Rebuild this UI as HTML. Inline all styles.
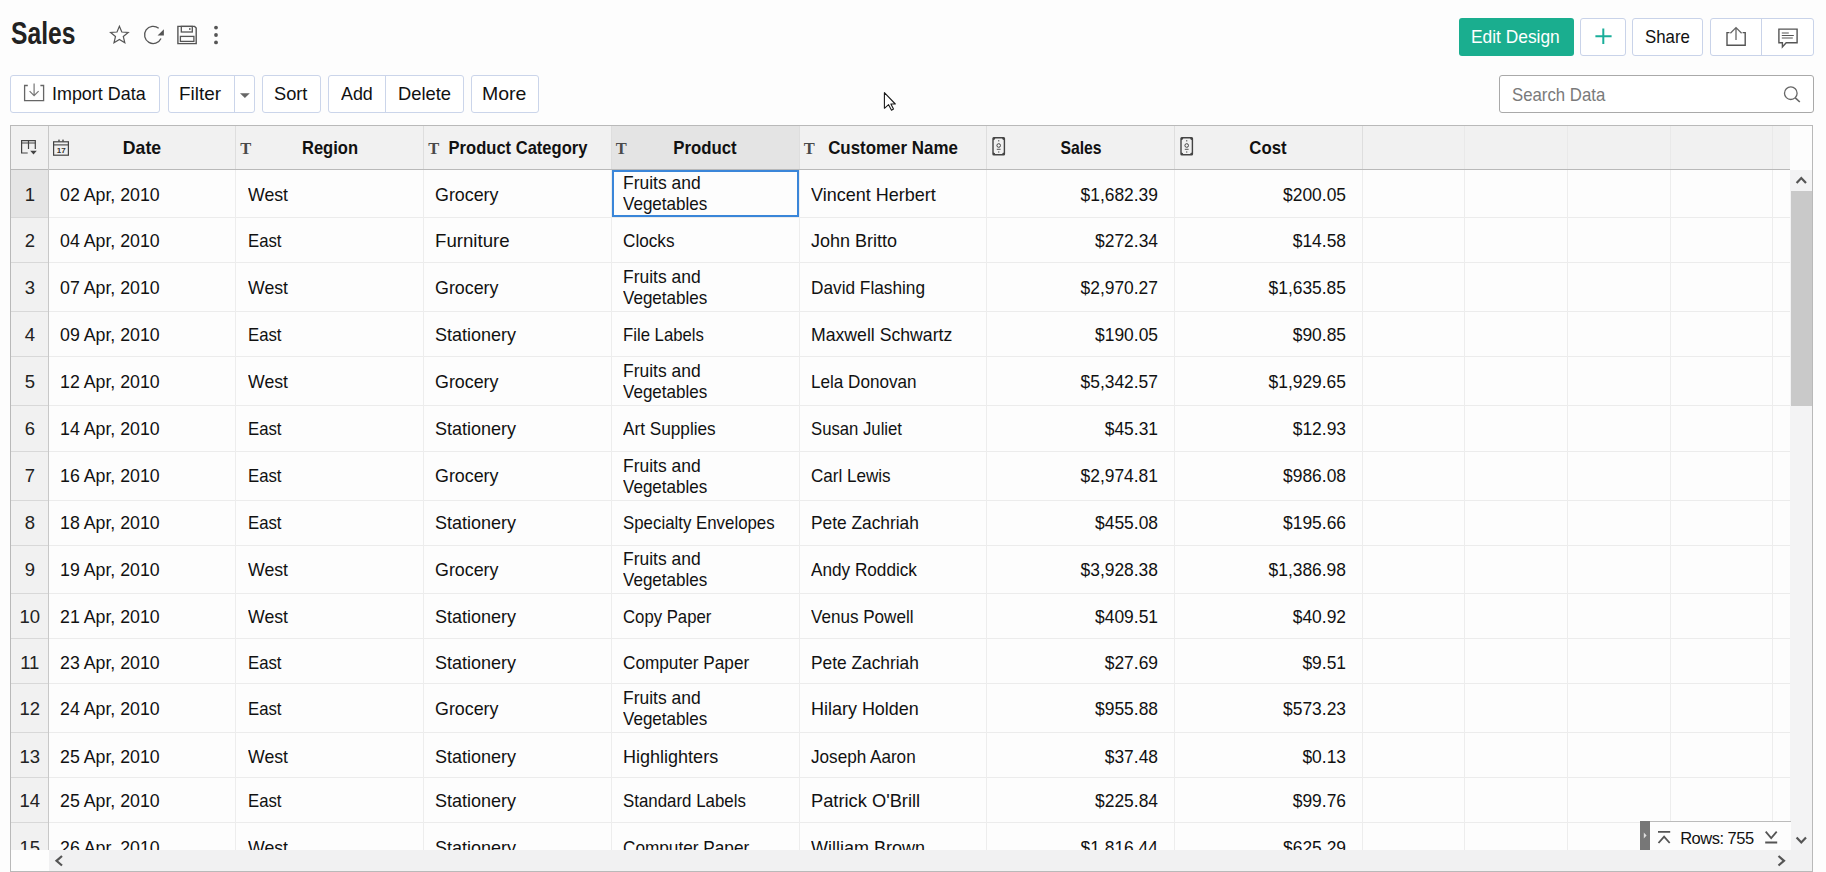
<!DOCTYPE html>
<html><head><meta charset="utf-8"><style>
html,body{margin:0;padding:0;}
body{width:1826px;height:872px;position:relative;overflow:hidden;background:#fdfdfd;font-family:"Liberation Sans",sans-serif;}
.t{position:absolute;white-space:nowrap;line-height:1;}
.r{position:absolute;box-sizing:border-box;}
svg{position:absolute;overflow:visible;}
</style></head><body>
<div class="t" style="left:10.9px;top:17.68px;font-size:30.5px;font-weight:700;color:#222;transform:scaleX(0.808);transform-origin:0 0;">Sales</div>
<svg style="left:0;top:0" width="260" height="60">
<path d="M119.4 26.3 L121.8 32.0 L128.2 32.4 L123.3 36.5 L124.8 42.8 L119.4 39.5 L114.0 42.8 L115.5 36.5 L110.6 32.4 L117.0 32.0 Z" fill="none" stroke="#555" stroke-width="1.2" stroke-linejoin="miter"/>
<path d="M161.0 38.5 A8.6 8.6 0 1 1 158.7 28.3" fill="none" stroke="#555" stroke-width="1.3"/>
<path d="M163.9 29.2 L163.9 35.6 L157.6 35.6 Z" fill="#555"/>
<path d="M177.9 26.4 H194.6 L196.2 28 V43.6 H177.9 Z" fill="none" stroke="#555" stroke-width="1.4"/>
<rect x="181.3" y="26.4" width="11" height="5.6" fill="none" stroke="#555" stroke-width="1.3"/>
<rect x="189" y="28.2" width="1.6" height="1.6" fill="#555"/>
<rect x="180.4" y="36.4" width="13.5" height="5" fill="none" stroke="#555" stroke-width="1.3"/>
<circle cx="216" cy="27.6" r="1.9" fill="#555"/><circle cx="216" cy="35" r="1.9" fill="#555"/><circle cx="216" cy="42.4" r="1.9" fill="#555"/>
</svg>
<div class="r" style="left:1458.5px;top:18px;width:115.0px;height:38px;background:#1aae8f;border-radius:3px;"></div>
<div class="t" style="left:1471px;top:28.34px;font-size:18.5px;font-weight:400;color:#fff;transform:scaleX(0.9376);transform-origin:0 0;">Edit Design</div>
<div class="r" style="left:1580px;top:18px;width:46px;height:38px;background:#fff;border:1px solid #c9d3e9;border-radius:3px;"></div>
<svg style="left:0;top:0" width="1" height="1"><path d="M1603.3 28.6 V44 M1595.4 36.3 H1611.6" stroke="#1aae9a" stroke-width="2"/></svg>
<div class="r" style="left:1632px;top:18px;width:71px;height:38px;background:#fff;border:1px solid #c9d3e9;border-radius:3px;"></div>
<div class="t" style="left:1645px;top:28.34px;font-size:18.5px;font-weight:400;color:#111;transform:scaleX(0.9104);transform-origin:0 0;">Share</div>
<div class="r" style="left:1710px;top:18px;width:104px;height:38px;background:#fff;border:1px solid #c9d3e9;border-radius:3px;"></div>
<div class="r" style="left:1761px;top:18px;width:1px;height:38px;background:#c9d3e9;"></div>
<svg style="left:0;top:0" width="1" height="1">
<path d="M1729.5 32.6 H1727 V45.3 H1745.2 V32.6 H1742.6" fill="none" stroke="#555" stroke-width="1.4"/>
<path d="M1736 40 V27.8 M1730.4 33.2 L1736 27.6 L1741.6 33.2" fill="none" stroke="#666" stroke-width="1.3"/>
<path d="M1778.9 29.1 H1797.1 V42.8 H1786.2 L1782.4 46.9 V42.8 H1778.9 Z" fill="none" stroke="#555" stroke-width="1.4"/>
<path d="M1781.8 33 H1788.8 M1781.8 35.5 H1793.8 M1781.8 38 H1792.8" stroke="#555" stroke-width="1.1"/>
</svg>
<div class="r" style="left:10px;top:75px;width:150px;height:38px;background:#fff;border:1px solid #cbd5ea;border-radius:3px;"></div>
<svg style="left:0;top:0" width="1" height="1">
<path d="M27.8 85.5 H24.6 V100.6 H43.6 V85.5 H40.4" fill="none" stroke="#666" stroke-width="1.3"/>
<path d="M34.1 83.5 V95.5 M29.6 91.2 L34.1 95.7 L38.6 91.2" fill="none" stroke="#777" stroke-width="1.2"/>
</svg>
<div class="t" style="left:52px;top:84.84px;font-size:18.5px;font-weight:400;color:#111;transform:scaleX(0.9684);transform-origin:0 0;">Import Data</div>
<div class="r" style="left:167.5px;top:75px;width:87.0px;height:38px;background:#fff;border:1px solid #cbd5ea;border-radius:3px;"></div>
<div class="r" style="left:234px;top:75px;width:1px;height:38px;background:#cbd5ea;"></div>
<div class="t" style="left:179.3px;top:84.84px;font-size:18.5px;font-weight:400;color:#111;transform:scaleX(1.02);transform-origin:0 0;">Filter</div>
<svg style="left:0;top:0" width="1" height="1"><path d="M240 93.2 H249.8 L244.9 98 Z" fill="#666"/></svg>
<div class="r" style="left:261.5px;top:75px;width:59.0px;height:38px;background:#fff;border:1px solid #cbd5ea;border-radius:3px;"></div>
<div class="t" style="left:274px;top:84.84px;font-size:18.5px;font-weight:400;color:#111;transform:scaleX(0.9848);transform-origin:0 0;">Sort</div>
<div class="r" style="left:327.5px;top:75px;width:136.5px;height:38px;background:#fff;border:1px solid #cbd5ea;border-radius:3px;"></div>
<div class="r" style="left:384.5px;top:75px;width:1.0px;height:38px;background:#cbd5ea;"></div>
<div class="t" style="left:340.5px;top:84.84px;font-size:18.5px;font-weight:400;color:#111;transform:scaleX(0.9656);transform-origin:0 0;">Add</div>
<div class="t" style="left:398.2px;top:84.84px;font-size:18.5px;font-weight:400;color:#111;transform:scaleX(0.9923);transform-origin:0 0;">Delete</div>
<div class="r" style="left:470.5px;top:75px;width:68.5px;height:38px;background:#fff;border:1px solid #cbd5ea;border-radius:3px;"></div>
<div class="t" style="left:482px;top:84.84px;font-size:18.5px;font-weight:400;color:#111;transform:scaleX(1.0525);transform-origin:0 0;">More</div>
<svg style="left:0;top:0" width="1" height="1">
<path d="M884.4 92.6 L884.4 108.3 L888.6 104.7 L891.5 110.2 L893.5 109.1 L890.9 104.0 L895.3 104.0 Z" fill="#fff" stroke="#1a1a1a" stroke-width="1.1" stroke-linejoin="round"/>
</svg>
<div class="r" style="left:1499px;top:75px;width:315px;height:38px;background:#fff;border:1px solid #a9a9a9;border-radius:3px;"></div>
<div class="t" style="left:1511.5px;top:86.14px;font-size:18.5px;font-weight:400;color:#7a7a7a;transform:scaleX(0.9069);transform-origin:0 0;">Search Data</div>
<svg style="left:0;top:0" width="1" height="1"><circle cx="1790.8" cy="93.2" r="6.3" fill="none" stroke="#666" stroke-width="1.3"/><path d="M1795.3 97.8 L1799.8 102" stroke="#666" stroke-width="1.6"/></svg>
<div class="r" style="left:10px;top:125px;width:1803px;height:747px;background:#fdfdfd;border:1px solid #b9b9b9;"></div>
<div class="r" style="left:11px;top:126px;width:1779px;height:43px;background:#f1f1f1;"></div>
<div class="r" style="left:611.5px;top:126px;width:187.5px;height:43px;background:#e4e4e4;"></div>
<div class="r" style="left:11px;top:170px;width:37px;height:680px;background:#f1f1f1;"></div>
<div class="r" style="left:11px;top:170px;width:37px;height:47px;background:#e5e5e5;"></div>
<div class="r" style="left:11px;top:217px;width:1779px;height:1px;background:#ececec;"></div>
<div class="r" style="left:11px;top:262px;width:1779px;height:1px;background:#ececec;"></div>
<div class="r" style="left:11px;top:311px;width:1779px;height:1px;background:#ececec;"></div>
<div class="r" style="left:11px;top:356px;width:1779px;height:1px;background:#ececec;"></div>
<div class="r" style="left:11px;top:405px;width:1779px;height:1px;background:#ececec;"></div>
<div class="r" style="left:11px;top:451px;width:1779px;height:1px;background:#ececec;"></div>
<div class="r" style="left:11px;top:500px;width:1779px;height:1px;background:#ececec;"></div>
<div class="r" style="left:11px;top:545px;width:1779px;height:1px;background:#ececec;"></div>
<div class="r" style="left:11px;top:593px;width:1779px;height:1px;background:#ececec;"></div>
<div class="r" style="left:11px;top:638px;width:1779px;height:1px;background:#ececec;"></div>
<div class="r" style="left:11px;top:683px;width:1779px;height:1px;background:#ececec;"></div>
<div class="r" style="left:11px;top:732px;width:1779px;height:1px;background:#ececec;"></div>
<div class="r" style="left:11px;top:777px;width:1779px;height:1px;background:#ececec;"></div>
<div class="r" style="left:11px;top:822px;width:1779px;height:1px;background:#ececec;"></div>
<div class="r" style="left:11px;top:217px;width:37px;height:1px;background:#d8d8d8;"></div>
<div class="r" style="left:11px;top:262px;width:37px;height:1px;background:#d8d8d8;"></div>
<div class="r" style="left:11px;top:311px;width:37px;height:1px;background:#d8d8d8;"></div>
<div class="r" style="left:11px;top:356px;width:37px;height:1px;background:#d8d8d8;"></div>
<div class="r" style="left:11px;top:405px;width:37px;height:1px;background:#d8d8d8;"></div>
<div class="r" style="left:11px;top:451px;width:37px;height:1px;background:#d8d8d8;"></div>
<div class="r" style="left:11px;top:500px;width:37px;height:1px;background:#d8d8d8;"></div>
<div class="r" style="left:11px;top:545px;width:37px;height:1px;background:#d8d8d8;"></div>
<div class="r" style="left:11px;top:593px;width:37px;height:1px;background:#d8d8d8;"></div>
<div class="r" style="left:11px;top:638px;width:37px;height:1px;background:#d8d8d8;"></div>
<div class="r" style="left:11px;top:683px;width:37px;height:1px;background:#d8d8d8;"></div>
<div class="r" style="left:11px;top:732px;width:37px;height:1px;background:#d8d8d8;"></div>
<div class="r" style="left:11px;top:777px;width:37px;height:1px;background:#d8d8d8;"></div>
<div class="r" style="left:11px;top:822px;width:37px;height:1px;background:#d8d8d8;"></div>
<div class="r" style="left:11px;top:169px;width:1779px;height:1px;background:#b9b9b9;"></div>
<div class="r" style="left:48px;top:126px;width:1px;height:724px;background:#c8c8c8;"></div>
<div class="r" style="left:235px;top:126px;width:1px;height:43px;background:#dedede;"></div>
<div class="r" style="left:235px;top:170px;width:1px;height:680px;background:#ededed;"></div>
<div class="r" style="left:423px;top:126px;width:1px;height:43px;background:#dedede;"></div>
<div class="r" style="left:423px;top:170px;width:1px;height:680px;background:#ededed;"></div>
<div class="r" style="left:611px;top:126px;width:1px;height:43px;background:#dedede;"></div>
<div class="r" style="left:611px;top:170px;width:1px;height:680px;background:#ededed;"></div>
<div class="r" style="left:799px;top:126px;width:1px;height:43px;background:#dedede;"></div>
<div class="r" style="left:799px;top:170px;width:1px;height:680px;background:#ededed;"></div>
<div class="r" style="left:986px;top:126px;width:1px;height:43px;background:#dedede;"></div>
<div class="r" style="left:986px;top:170px;width:1px;height:680px;background:#ededed;"></div>
<div class="r" style="left:1174px;top:126px;width:1px;height:43px;background:#dedede;"></div>
<div class="r" style="left:1174px;top:170px;width:1px;height:680px;background:#ededed;"></div>
<div class="r" style="left:1362px;top:126px;width:1px;height:43px;background:#dedede;"></div>
<div class="r" style="left:1362px;top:170px;width:1px;height:680px;background:#ededed;"></div>
<div class="r" style="left:1464px;top:126px;width:1px;height:43px;background:#e9e9e9;"></div>
<div class="r" style="left:1464px;top:170px;width:1px;height:680px;background:#ededed;"></div>
<div class="r" style="left:1567px;top:126px;width:1px;height:43px;background:#e9e9e9;"></div>
<div class="r" style="left:1567px;top:170px;width:1px;height:680px;background:#ededed;"></div>
<div class="r" style="left:1670px;top:126px;width:1px;height:43px;background:#e9e9e9;"></div>
<div class="r" style="left:1670px;top:170px;width:1px;height:680px;background:#ededed;"></div>
<div class="r" style="left:1772px;top:126px;width:1px;height:43px;background:#e9e9e9;"></div>
<div class="r" style="left:1772px;top:170px;width:1px;height:680px;background:#ededed;"></div>
<div class="r" style="left:1790px;top:126px;width:22px;height:44px;background:#fdfdfd;"></div>
<svg style="left:0;top:0" width="1" height="1">
<path d="M27.7 153 H21.6 V140.6 H35.3 V149" fill="none" stroke="#444" stroke-width="1.2"/>
<path d="M21.6 143 H35.3 M28.5 140.6 V149" fill="none" stroke="#444" stroke-width="1.2"/>
<path d="M30.2 150.8 H36.8 L33.5 154.6 Z" fill="#444"/>
<rect x="53.6" y="141.8" width="14.8" height="13.4" fill="none" stroke="#444" stroke-width="1.2"/>
<path d="M53.6 144.9 H68.4" stroke="#444" stroke-width="1.1"/>
<rect x="58.3" y="139.6" width="1.4" height="2" fill="#444"/><rect x="62.3" y="139.6" width="1.4" height="2" fill="#444"/>
</svg>
<div class="t" style="left:56.8px;top:147.43px;font-size:8px;font-weight:700;color:#333;">17</div>
<div class="t" style="left:240.3px;top:141.03px;font-size:16.5px;font-weight:700;color:#4a4a4a;font-family:'Liberation Serif',serif;">T</div>
<div class="t" style="left:428.3px;top:141.03px;font-size:16.5px;font-weight:700;color:#4a4a4a;font-family:'Liberation Serif',serif;">T</div>
<div class="t" style="left:615.8px;top:141.03px;font-size:16.5px;font-weight:700;color:#4a4a4a;font-family:'Liberation Serif',serif;">T</div>
<div class="t" style="left:803.8px;top:141.03px;font-size:16.5px;font-weight:700;color:#4a4a4a;font-family:'Liberation Serif',serif;">T</div>
<svg style="left:0;top:0" width="1" height="1">
<rect x="993" y="137.8" width="11.4" height="17" rx="0.8" fill="none" stroke="#444" stroke-width="1.4"/>
<circle cx="998.7" cy="145.5" r="1.8" fill="none" stroke="#444" stroke-width="1"/>
<path d="M996.8 149.3 H1000.6" stroke="#444" stroke-width="0.9"/>
<rect x="998.1" y="140.2" width="1.2" height="1.2" fill="#555"/><rect x="998.1" y="151.4" width="1.2" height="1.2" fill="#555"/>
<path d="M993 137.8 h2.4 a2.4 2.4 0 0 1 -2.4 2.4 Z M1004.4 137.8 h-2.4 a2.4 2.4 0 0 0 2.4 2.4 Z M993 154.8 h2.4 a2.4 2.4 0 0 0 -2.4 -2.4 Z M1004.4 154.8 h-2.4 a2.4 2.4 0 0 1 2.4 -2.4 Z" fill="#444"/>
</svg>
<svg style="left:0;top:0" width="1" height="1">
<rect x="1181" y="137.8" width="11.4" height="17" rx="0.8" fill="none" stroke="#444" stroke-width="1.4"/>
<circle cx="1186.7" cy="145.5" r="1.8" fill="none" stroke="#444" stroke-width="1"/>
<path d="M1184.8 149.3 H1188.6" stroke="#444" stroke-width="0.9"/>
<rect x="1186.1" y="140.2" width="1.2" height="1.2" fill="#555"/><rect x="1186.1" y="151.4" width="1.2" height="1.2" fill="#555"/>
<path d="M1181 137.8 h2.4 a2.4 2.4 0 0 1 -2.4 2.4 Z M1192.4 137.8 h-2.4 a2.4 2.4 0 0 0 2.4 2.4 Z M1181 154.8 h2.4 a2.4 2.4 0 0 0 -2.4 -2.4 Z M1192.4 154.8 h-2.4 a2.4 2.4 0 0 1 2.4 -2.4 Z" fill="#444"/>
</svg>
<div class="t" style="left:41.70px;width:200px;text-align:center;top:139.34px;font-size:18.5px;font-weight:700;color:#111;transform:scaleX(0.9538);transform-origin:50% 0;">Date</div>
<div class="t" style="left:230.00px;width:200px;text-align:center;top:139.34px;font-size:18.5px;font-weight:700;color:#111;transform:scaleX(0.8934);transform-origin:50% 0;">Region</div>
<div class="t" style="left:417.70px;width:200px;text-align:center;top:139.34px;font-size:18.5px;font-weight:700;color:#111;transform:scaleX(0.8945);transform-origin:50% 0;">Product Category</div>
<div class="t" style="left:604.50px;width:200px;text-align:center;top:139.34px;font-size:18.5px;font-weight:700;color:#111;transform:scaleX(0.9058);transform-origin:50% 0;">Product</div>
<div class="t" style="left:793.00px;width:200px;text-align:center;top:139.34px;font-size:18.5px;font-weight:700;color:#111;transform:scaleX(0.9143);transform-origin:50% 0;">Customer Name</div>
<div class="t" style="left:981.00px;width:200px;text-align:center;top:139.34px;font-size:18.5px;font-weight:700;color:#111;transform:scaleX(0.8511);transform-origin:50% 0;">Sales</div>
<div class="t" style="left:1168.40px;width:200px;text-align:center;top:139.34px;font-size:18.5px;font-weight:700;color:#111;transform:scaleX(0.9062);transform-origin:50% 0;">Cost</div>
<div style="position:absolute;left:0;top:170px;width:1790px;height:680px;overflow:hidden">
<div class="t" style="left:11.80px;width:36px;text-align:center;top:15.74px;font-size:18.5px;font-weight:400;color:#222;">1</div>
<div class="t" style="left:60.4px;top:15.74px;font-size:18.5px;font-weight:400;color:#111;transform:scaleX(0.9598);transform-origin:0 0;">02 Apr, 2010</div>
<div class="t" style="left:247.6px;top:15.74px;font-size:18.5px;font-weight:400;color:#111;transform:scaleX(0.9571);transform-origin:0 0;">West</div>
<div class="t" style="left:435px;top:15.74px;font-size:18.5px;font-weight:400;color:#111;transform:scaleX(0.9646);transform-origin:0 0;">Grocery</div>
<div class="t" style="left:623px;top:4.34px;font-size:18.5px;font-weight:400;color:#111;transform:scaleX(0.9437);transform-origin:0 0;">Fruits and</div>
<div class="t" style="left:623px;top:25.34px;font-size:18.5px;font-weight:400;color:#111;transform:scaleX(0.9209);transform-origin:0 0;">Vegetables</div>
<div class="t" style="left:810.5px;top:15.74px;font-size:18.5px;font-weight:400;color:#111;transform:scaleX(0.9727);transform-origin:0 0;">Vincent Herbert</div>
<div class="t" style="left:758.00px;width:400px;text-align:right;top:15.74px;font-size:18.5px;font-weight:400;color:#111;transform:scaleX(0.9411);transform-origin:100% 0;">$1,682.39</div>
<div class="t" style="left:945.50px;width:400px;text-align:right;top:15.74px;font-size:18.5px;font-weight:400;color:#111;transform:scaleX(0.9411);transform-origin:100% 0;">$200.05</div>
<div class="t" style="left:11.80px;width:36px;text-align:center;top:62.44px;font-size:18.5px;font-weight:400;color:#222;">2</div>
<div class="t" style="left:60.4px;top:62.44px;font-size:18.5px;font-weight:400;color:#111;transform:scaleX(0.9598);transform-origin:0 0;">04 Apr, 2010</div>
<div class="t" style="left:247.6px;top:62.44px;font-size:18.5px;font-weight:400;color:#111;transform:scaleX(0.9056);transform-origin:0 0;">East</div>
<div class="t" style="left:435px;top:62.44px;font-size:18.5px;font-weight:400;color:#111;transform:scaleX(1.0083);transform-origin:0 0;">Furniture</div>
<div class="t" style="left:623px;top:62.44px;font-size:18.5px;font-weight:400;color:#111;transform:scaleX(0.9278);transform-origin:0 0;">Clocks</div>
<div class="t" style="left:810.5px;top:62.44px;font-size:18.5px;font-weight:400;color:#111;transform:scaleX(0.9727);transform-origin:0 0;">John Britto</div>
<div class="t" style="left:758.00px;width:400px;text-align:right;top:62.44px;font-size:18.5px;font-weight:400;color:#111;transform:scaleX(0.9411);transform-origin:100% 0;">$272.34</div>
<div class="t" style="left:945.50px;width:400px;text-align:right;top:62.44px;font-size:18.5px;font-weight:400;color:#111;transform:scaleX(0.9411);transform-origin:100% 0;">$14.58</div>
<div class="t" style="left:11.80px;width:36px;text-align:center;top:109.34px;font-size:18.5px;font-weight:400;color:#222;">3</div>
<div class="t" style="left:60.4px;top:109.34px;font-size:18.5px;font-weight:400;color:#111;transform:scaleX(0.9598);transform-origin:0 0;">07 Apr, 2010</div>
<div class="t" style="left:247.6px;top:109.34px;font-size:18.5px;font-weight:400;color:#111;transform:scaleX(0.9571);transform-origin:0 0;">West</div>
<div class="t" style="left:435px;top:109.34px;font-size:18.5px;font-weight:400;color:#111;transform:scaleX(0.9646);transform-origin:0 0;">Grocery</div>
<div class="t" style="left:623px;top:97.84px;font-size:18.5px;font-weight:400;color:#111;transform:scaleX(0.9437);transform-origin:0 0;">Fruits and</div>
<div class="t" style="left:623px;top:118.84px;font-size:18.5px;font-weight:400;color:#111;transform:scaleX(0.9209);transform-origin:0 0;">Vegetables</div>
<div class="t" style="left:810.5px;top:109.34px;font-size:18.5px;font-weight:400;color:#111;transform:scaleX(0.9317);transform-origin:0 0;">David Flashing</div>
<div class="t" style="left:758.00px;width:400px;text-align:right;top:109.34px;font-size:18.5px;font-weight:400;color:#111;transform:scaleX(0.9411);transform-origin:100% 0;">$2,970.27</div>
<div class="t" style="left:945.50px;width:400px;text-align:right;top:109.34px;font-size:18.5px;font-weight:400;color:#111;transform:scaleX(0.9411);transform-origin:100% 0;">$1,635.85</div>
<div class="t" style="left:11.80px;width:36px;text-align:center;top:156.34px;font-size:18.5px;font-weight:400;color:#222;">4</div>
<div class="t" style="left:60.4px;top:156.34px;font-size:18.5px;font-weight:400;color:#111;transform:scaleX(0.9598);transform-origin:0 0;">09 Apr, 2010</div>
<div class="t" style="left:247.6px;top:156.34px;font-size:18.5px;font-weight:400;color:#111;transform:scaleX(0.9056);transform-origin:0 0;">East</div>
<div class="t" style="left:435px;top:156.34px;font-size:18.5px;font-weight:400;color:#111;transform:scaleX(0.9732);transform-origin:0 0;">Stationery</div>
<div class="t" style="left:623px;top:156.34px;font-size:18.5px;font-weight:400;color:#111;transform:scaleX(0.9045);transform-origin:0 0;">File Labels</div>
<div class="t" style="left:810.5px;top:156.34px;font-size:18.5px;font-weight:400;color:#111;transform:scaleX(0.9541);transform-origin:0 0;">Maxwell Schwartz</div>
<div class="t" style="left:758.00px;width:400px;text-align:right;top:156.34px;font-size:18.5px;font-weight:400;color:#111;transform:scaleX(0.9411);transform-origin:100% 0;">$190.05</div>
<div class="t" style="left:945.50px;width:400px;text-align:right;top:156.34px;font-size:18.5px;font-weight:400;color:#111;transform:scaleX(0.9411);transform-origin:100% 0;">$90.85</div>
<div class="t" style="left:11.80px;width:36px;text-align:center;top:202.84px;font-size:18.5px;font-weight:400;color:#222;">5</div>
<div class="t" style="left:60.4px;top:202.84px;font-size:18.5px;font-weight:400;color:#111;transform:scaleX(0.9598);transform-origin:0 0;">12 Apr, 2010</div>
<div class="t" style="left:247.6px;top:202.84px;font-size:18.5px;font-weight:400;color:#111;transform:scaleX(0.9571);transform-origin:0 0;">West</div>
<div class="t" style="left:435px;top:202.84px;font-size:18.5px;font-weight:400;color:#111;transform:scaleX(0.9646);transform-origin:0 0;">Grocery</div>
<div class="t" style="left:623px;top:191.84px;font-size:18.5px;font-weight:400;color:#111;transform:scaleX(0.9437);transform-origin:0 0;">Fruits and</div>
<div class="t" style="left:623px;top:212.84px;font-size:18.5px;font-weight:400;color:#111;transform:scaleX(0.9209);transform-origin:0 0;">Vegetables</div>
<div class="t" style="left:810.5px;top:202.84px;font-size:18.5px;font-weight:400;color:#111;transform:scaleX(0.925);transform-origin:0 0;">Lela Donovan</div>
<div class="t" style="left:758.00px;width:400px;text-align:right;top:202.84px;font-size:18.5px;font-weight:400;color:#111;transform:scaleX(0.9411);transform-origin:100% 0;">$5,342.57</div>
<div class="t" style="left:945.50px;width:400px;text-align:right;top:202.84px;font-size:18.5px;font-weight:400;color:#111;transform:scaleX(0.9411);transform-origin:100% 0;">$1,929.65</div>
<div class="t" style="left:11.80px;width:36px;text-align:center;top:250.04px;font-size:18.5px;font-weight:400;color:#222;">6</div>
<div class="t" style="left:60.4px;top:250.04px;font-size:18.5px;font-weight:400;color:#111;transform:scaleX(0.9598);transform-origin:0 0;">14 Apr, 2010</div>
<div class="t" style="left:247.6px;top:250.04px;font-size:18.5px;font-weight:400;color:#111;transform:scaleX(0.9056);transform-origin:0 0;">East</div>
<div class="t" style="left:435px;top:250.04px;font-size:18.5px;font-weight:400;color:#111;transform:scaleX(0.9732);transform-origin:0 0;">Stationery</div>
<div class="t" style="left:623px;top:250.04px;font-size:18.5px;font-weight:400;color:#111;transform:scaleX(0.9293);transform-origin:0 0;">Art Supplies</div>
<div class="t" style="left:810.5px;top:250.04px;font-size:18.5px;font-weight:400;color:#111;transform:scaleX(0.903);transform-origin:0 0;">Susan Juliet</div>
<div class="t" style="left:758.00px;width:400px;text-align:right;top:250.04px;font-size:18.5px;font-weight:400;color:#111;transform:scaleX(0.9411);transform-origin:100% 0;">$45.31</div>
<div class="t" style="left:945.50px;width:400px;text-align:right;top:250.04px;font-size:18.5px;font-weight:400;color:#111;transform:scaleX(0.9411);transform-origin:100% 0;">$12.93</div>
<div class="t" style="left:11.80px;width:36px;text-align:center;top:296.74px;font-size:18.5px;font-weight:400;color:#222;">7</div>
<div class="t" style="left:60.4px;top:296.74px;font-size:18.5px;font-weight:400;color:#111;transform:scaleX(0.9598);transform-origin:0 0;">16 Apr, 2010</div>
<div class="t" style="left:247.6px;top:296.74px;font-size:18.5px;font-weight:400;color:#111;transform:scaleX(0.9056);transform-origin:0 0;">East</div>
<div class="t" style="left:435px;top:296.74px;font-size:18.5px;font-weight:400;color:#111;transform:scaleX(0.9646);transform-origin:0 0;">Grocery</div>
<div class="t" style="left:623px;top:286.84px;font-size:18.5px;font-weight:400;color:#111;transform:scaleX(0.9437);transform-origin:0 0;">Fruits and</div>
<div class="t" style="left:623px;top:307.84px;font-size:18.5px;font-weight:400;color:#111;transform:scaleX(0.9209);transform-origin:0 0;">Vegetables</div>
<div class="t" style="left:810.5px;top:296.74px;font-size:18.5px;font-weight:400;color:#111;transform:scaleX(0.9224);transform-origin:0 0;">Carl Lewis</div>
<div class="t" style="left:758.00px;width:400px;text-align:right;top:296.74px;font-size:18.5px;font-weight:400;color:#111;transform:scaleX(0.9411);transform-origin:100% 0;">$2,974.81</div>
<div class="t" style="left:945.50px;width:400px;text-align:right;top:296.74px;font-size:18.5px;font-weight:400;color:#111;transform:scaleX(0.9411);transform-origin:100% 0;">$986.08</div>
<div class="t" style="left:11.80px;width:36px;text-align:center;top:343.64px;font-size:18.5px;font-weight:400;color:#222;">8</div>
<div class="t" style="left:60.4px;top:343.64px;font-size:18.5px;font-weight:400;color:#111;transform:scaleX(0.9598);transform-origin:0 0;">18 Apr, 2010</div>
<div class="t" style="left:247.6px;top:343.64px;font-size:18.5px;font-weight:400;color:#111;transform:scaleX(0.9056);transform-origin:0 0;">East</div>
<div class="t" style="left:435px;top:343.64px;font-size:18.5px;font-weight:400;color:#111;transform:scaleX(0.9732);transform-origin:0 0;">Stationery</div>
<div class="t" style="left:623px;top:343.64px;font-size:18.5px;font-weight:400;color:#111;transform:scaleX(0.9103);transform-origin:0 0;">Specialty Envelopes</div>
<div class="t" style="left:810.5px;top:343.64px;font-size:18.5px;font-weight:400;color:#111;transform:scaleX(0.9363);transform-origin:0 0;">Pete Zachriah</div>
<div class="t" style="left:758.00px;width:400px;text-align:right;top:343.64px;font-size:18.5px;font-weight:400;color:#111;transform:scaleX(0.9411);transform-origin:100% 0;">$455.08</div>
<div class="t" style="left:945.50px;width:400px;text-align:right;top:343.64px;font-size:18.5px;font-weight:400;color:#111;transform:scaleX(0.9411);transform-origin:100% 0;">$195.66</div>
<div class="t" style="left:11.80px;width:36px;text-align:center;top:391.14px;font-size:18.5px;font-weight:400;color:#222;">9</div>
<div class="t" style="left:60.4px;top:391.14px;font-size:18.5px;font-weight:400;color:#111;transform:scaleX(0.9598);transform-origin:0 0;">19 Apr, 2010</div>
<div class="t" style="left:247.6px;top:391.14px;font-size:18.5px;font-weight:400;color:#111;transform:scaleX(0.9571);transform-origin:0 0;">West</div>
<div class="t" style="left:435px;top:391.14px;font-size:18.5px;font-weight:400;color:#111;transform:scaleX(0.9646);transform-origin:0 0;">Grocery</div>
<div class="t" style="left:623px;top:380.34px;font-size:18.5px;font-weight:400;color:#111;transform:scaleX(0.9437);transform-origin:0 0;">Fruits and</div>
<div class="t" style="left:623px;top:401.34px;font-size:18.5px;font-weight:400;color:#111;transform:scaleX(0.9209);transform-origin:0 0;">Vegetables</div>
<div class="t" style="left:810.5px;top:391.14px;font-size:18.5px;font-weight:400;color:#111;transform:scaleX(0.9281);transform-origin:0 0;">Andy Roddick</div>
<div class="t" style="left:758.00px;width:400px;text-align:right;top:391.14px;font-size:18.5px;font-weight:400;color:#111;transform:scaleX(0.9411);transform-origin:100% 0;">$3,928.38</div>
<div class="t" style="left:945.50px;width:400px;text-align:right;top:391.14px;font-size:18.5px;font-weight:400;color:#111;transform:scaleX(0.9411);transform-origin:100% 0;">$1,386.98</div>
<div class="t" style="left:11.80px;width:36px;text-align:center;top:438.04px;font-size:18.5px;font-weight:400;color:#222;">10</div>
<div class="t" style="left:60.4px;top:438.04px;font-size:18.5px;font-weight:400;color:#111;transform:scaleX(0.9598);transform-origin:0 0;">21 Apr, 2010</div>
<div class="t" style="left:247.6px;top:438.04px;font-size:18.5px;font-weight:400;color:#111;transform:scaleX(0.9571);transform-origin:0 0;">West</div>
<div class="t" style="left:435px;top:438.04px;font-size:18.5px;font-weight:400;color:#111;transform:scaleX(0.9732);transform-origin:0 0;">Stationery</div>
<div class="t" style="left:623px;top:438.04px;font-size:18.5px;font-weight:400;color:#111;transform:scaleX(0.9041);transform-origin:0 0;">Copy Paper</div>
<div class="t" style="left:810.5px;top:438.04px;font-size:18.5px;font-weight:400;color:#111;transform:scaleX(0.9227);transform-origin:0 0;">Venus Powell</div>
<div class="t" style="left:758.00px;width:400px;text-align:right;top:438.04px;font-size:18.5px;font-weight:400;color:#111;transform:scaleX(0.9411);transform-origin:100% 0;">$409.51</div>
<div class="t" style="left:945.50px;width:400px;text-align:right;top:438.04px;font-size:18.5px;font-weight:400;color:#111;transform:scaleX(0.9411);transform-origin:100% 0;">$40.92</div>
<div class="t" style="left:11.80px;width:36px;text-align:center;top:483.54px;font-size:18.5px;font-weight:400;color:#222;">11</div>
<div class="t" style="left:60.4px;top:483.54px;font-size:18.5px;font-weight:400;color:#111;transform:scaleX(0.9598);transform-origin:0 0;">23 Apr, 2010</div>
<div class="t" style="left:247.6px;top:483.54px;font-size:18.5px;font-weight:400;color:#111;transform:scaleX(0.9056);transform-origin:0 0;">East</div>
<div class="t" style="left:435px;top:483.54px;font-size:18.5px;font-weight:400;color:#111;transform:scaleX(0.9732);transform-origin:0 0;">Stationery</div>
<div class="t" style="left:623px;top:483.54px;font-size:18.5px;font-weight:400;color:#111;transform:scaleX(0.9296);transform-origin:0 0;">Computer Paper</div>
<div class="t" style="left:810.5px;top:483.54px;font-size:18.5px;font-weight:400;color:#111;transform:scaleX(0.9363);transform-origin:0 0;">Pete Zachriah</div>
<div class="t" style="left:758.00px;width:400px;text-align:right;top:483.54px;font-size:18.5px;font-weight:400;color:#111;transform:scaleX(0.9411);transform-origin:100% 0;">$27.69</div>
<div class="t" style="left:945.50px;width:400px;text-align:right;top:483.54px;font-size:18.5px;font-weight:400;color:#111;transform:scaleX(0.9411);transform-origin:100% 0;">$9.51</div>
<div class="t" style="left:11.80px;width:36px;text-align:center;top:530.34px;font-size:18.5px;font-weight:400;color:#222;">12</div>
<div class="t" style="left:60.4px;top:530.34px;font-size:18.5px;font-weight:400;color:#111;transform:scaleX(0.9598);transform-origin:0 0;">24 Apr, 2010</div>
<div class="t" style="left:247.6px;top:530.34px;font-size:18.5px;font-weight:400;color:#111;transform:scaleX(0.9056);transform-origin:0 0;">East</div>
<div class="t" style="left:435px;top:530.34px;font-size:18.5px;font-weight:400;color:#111;transform:scaleX(0.9646);transform-origin:0 0;">Grocery</div>
<div class="t" style="left:623px;top:518.84px;font-size:18.5px;font-weight:400;color:#111;transform:scaleX(0.9437);transform-origin:0 0;">Fruits and</div>
<div class="t" style="left:623px;top:539.84px;font-size:18.5px;font-weight:400;color:#111;transform:scaleX(0.9209);transform-origin:0 0;">Vegetables</div>
<div class="t" style="left:810.5px;top:530.34px;font-size:18.5px;font-weight:400;color:#111;transform:scaleX(0.9706);transform-origin:0 0;">Hilary Holden</div>
<div class="t" style="left:758.00px;width:400px;text-align:right;top:530.34px;font-size:18.5px;font-weight:400;color:#111;transform:scaleX(0.9411);transform-origin:100% 0;">$955.88</div>
<div class="t" style="left:945.50px;width:400px;text-align:right;top:530.34px;font-size:18.5px;font-weight:400;color:#111;transform:scaleX(0.9411);transform-origin:100% 0;">$573.23</div>
<div class="t" style="left:11.80px;width:36px;text-align:center;top:577.64px;font-size:18.5px;font-weight:400;color:#222;">13</div>
<div class="t" style="left:60.4px;top:577.64px;font-size:18.5px;font-weight:400;color:#111;transform:scaleX(0.9598);transform-origin:0 0;">25 Apr, 2010</div>
<div class="t" style="left:247.6px;top:577.64px;font-size:18.5px;font-weight:400;color:#111;transform:scaleX(0.9571);transform-origin:0 0;">West</div>
<div class="t" style="left:435px;top:577.64px;font-size:18.5px;font-weight:400;color:#111;transform:scaleX(0.9732);transform-origin:0 0;">Stationery</div>
<div class="t" style="left:623px;top:577.64px;font-size:18.5px;font-weight:400;color:#111;transform:scaleX(0.974);transform-origin:0 0;">Highlighters</div>
<div class="t" style="left:810.5px;top:577.64px;font-size:18.5px;font-weight:400;color:#111;transform:scaleX(0.925);transform-origin:0 0;">Joseph Aaron</div>
<div class="t" style="left:758.00px;width:400px;text-align:right;top:577.64px;font-size:18.5px;font-weight:400;color:#111;transform:scaleX(0.9411);transform-origin:100% 0;">$37.48</div>
<div class="t" style="left:945.50px;width:400px;text-align:right;top:577.64px;font-size:18.5px;font-weight:400;color:#111;transform:scaleX(0.9411);transform-origin:100% 0;">$0.13</div>
<div class="t" style="left:11.80px;width:36px;text-align:center;top:622.04px;font-size:18.5px;font-weight:400;color:#222;">14</div>
<div class="t" style="left:60.4px;top:622.04px;font-size:18.5px;font-weight:400;color:#111;transform:scaleX(0.9598);transform-origin:0 0;">25 Apr, 2010</div>
<div class="t" style="left:247.6px;top:622.04px;font-size:18.5px;font-weight:400;color:#111;transform:scaleX(0.9056);transform-origin:0 0;">East</div>
<div class="t" style="left:435px;top:622.04px;font-size:18.5px;font-weight:400;color:#111;transform:scaleX(0.9732);transform-origin:0 0;">Stationery</div>
<div class="t" style="left:623px;top:622.04px;font-size:18.5px;font-weight:400;color:#111;transform:scaleX(0.912);transform-origin:0 0;">Standard Labels</div>
<div class="t" style="left:810.5px;top:622.04px;font-size:18.5px;font-weight:400;color:#111;transform:scaleX(0.988);transform-origin:0 0;">Patrick O'Brill</div>
<div class="t" style="left:758.00px;width:400px;text-align:right;top:622.04px;font-size:18.5px;font-weight:400;color:#111;transform:scaleX(0.9411);transform-origin:100% 0;">$225.84</div>
<div class="t" style="left:945.50px;width:400px;text-align:right;top:622.04px;font-size:18.5px;font-weight:400;color:#111;transform:scaleX(0.9411);transform-origin:100% 0;">$99.76</div>
<div class="t" style="left:11.80px;width:36px;text-align:center;top:668.64px;font-size:18.5px;font-weight:400;color:#222;">15</div>
<div class="t" style="left:60.4px;top:668.64px;font-size:18.5px;font-weight:400;color:#111;transform:scaleX(0.9598);transform-origin:0 0;">26 Apr, 2010</div>
<div class="t" style="left:247.6px;top:668.64px;font-size:18.5px;font-weight:400;color:#111;transform:scaleX(0.9571);transform-origin:0 0;">West</div>
<div class="t" style="left:435px;top:668.64px;font-size:18.5px;font-weight:400;color:#111;transform:scaleX(0.9732);transform-origin:0 0;">Stationery</div>
<div class="t" style="left:623px;top:668.64px;font-size:18.5px;font-weight:400;color:#111;transform:scaleX(0.9296);transform-origin:0 0;">Computer Paper</div>
<div class="t" style="left:810.5px;top:668.64px;font-size:18.5px;font-weight:400;color:#111;transform:scaleX(0.9741);transform-origin:0 0;">William Brown</div>
<div class="t" style="left:758.00px;width:400px;text-align:right;top:668.64px;font-size:18.5px;font-weight:400;color:#111;transform:scaleX(0.9411);transform-origin:100% 0;">$1,816.44</div>
<div class="t" style="left:945.50px;width:400px;text-align:right;top:668.64px;font-size:18.5px;font-weight:400;color:#111;transform:scaleX(0.9411);transform-origin:100% 0;">$625.29</div>
</div>
<div class="r" style="left:612px;top:170px;width:187px;height:47px;border:2px solid #3a86d9;"></div>
<div class="r" style="left:1790px;top:170px;width:22px;height:680px;background:#f3f3f4;"></div>
<div class="r" style="left:1791px;top:191px;width:21px;height:215px;background:#c9c9c9;"></div>
<svg style="left:0;top:0" width="1" height="1"><path d="M1796.6 183 L1801.3 178 L1806 183" fill="none" stroke="#555" stroke-width="2.2"/><path d="M1796.6 837.5 L1801.3 842.5 L1806 837.5" fill="none" stroke="#555" stroke-width="2.2"/></svg>
<div class="r" style="left:11px;top:850px;width:38px;height:21px;background:#fdfdfd;"></div>
<div class="r" style="left:49px;top:850px;width:1741px;height:21px;background:#f1f1f2;"></div>
<div class="r" style="left:1790px;top:850px;width:22px;height:21px;background:#f1f1f2;"></div>
<svg style="left:0;top:0" width="1" height="1"><path d="M62 856 L56.5 860.8 L62 865.5" fill="none" stroke="#555" stroke-width="2.2"/><path d="M1778.5 856 L1784 860.8 L1778.5 865.5" fill="none" stroke="#555" stroke-width="2.2"/></svg>
<div class="r" style="left:1650px;top:821px;width:141px;height:29px;background:#fdfdfd;border-top:1px solid #bbb;"></div>
<div class="r" style="left:1640px;top:821px;width:10px;height:29px;background:#777;"></div>
<svg style="left:0;top:0" width="1" height="1"><path d="M1643.8 832.5 L1646.6 835.5 L1643.8 838.5 Z" fill="#ddd"/></svg>
<svg style="left:0;top:0" width="1" height="1">
<path d="M1658 831.8 H1670.2 M1658.5 843 L1664.1 836.6 L1669.7 843" fill="none" stroke="#555" stroke-width="1.8"/>
<path d="M1765.2 842.5 H1777.2 M1765.7 831.6 L1771.2 838 L1776.7 831.6" fill="none" stroke="#555" stroke-width="1.8"/>
</svg>
<div class="t" style="left:1680.2px;top:830.23px;font-size:16.5px;font-weight:400;color:#111;letter-spacing:-0.5px;">Rows: 755</div>
</body></html>
